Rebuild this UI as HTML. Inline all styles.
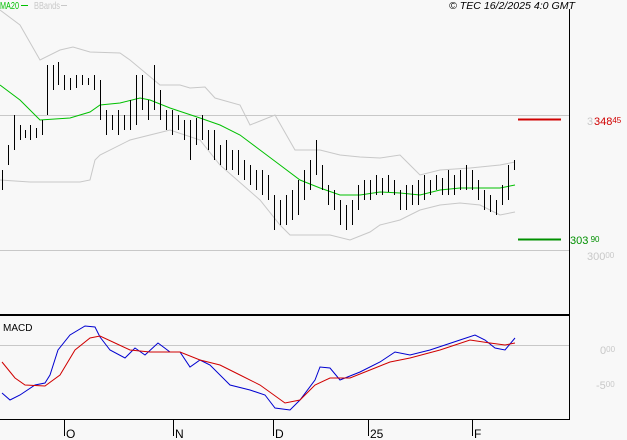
<!DOCTYPE html>
<html><head><style>
html,body{margin:0;padding:0;background:#f8f8f8;}
body{width:627px;height:440px;overflow:hidden;position:relative;font-family:"Liberation Sans",sans-serif;}
</style></head><body>
<svg width="627" height="440" viewBox="0 0 627 440" xmlns="http://www.w3.org/2000/svg" style="position:absolute;left:0;top:0">
<rect width="627" height="440" fill="#f8f8f8"/>
<line x1="0" y1="115.5" x2="569" y2="115.5" stroke="#c8c8c8"/>
<line x1="0" y1="250.5" x2="569" y2="250.5" stroke="#c8c8c8"/>
<line x1="0" y1="345.5" x2="569" y2="345.5" stroke="#c8c8c8"/>
<line x1="569.5" y1="9" x2="569.5" y2="420" stroke="#000"/>
<line x1="0" y1="315" x2="570" y2="315" stroke="#000" stroke-width="2"/>
<line x1="0" y1="419.5" x2="570" y2="419.5" stroke="#000"/>
<g stroke="#000"><line x1="64.5" y1="420" x2="64.5" y2="436"/><line x1="173.5" y1="420" x2="173.5" y2="436"/><line x1="273.5" y1="420" x2="273.5" y2="436"/><line x1="368.5" y1="420" x2="368.5" y2="436"/><line x1="472.5" y1="420" x2="472.5" y2="436"/></g>
<g font-size="12" fill="#000"><text x="66" y="438">O</text><text x="175" y="438">N</text><text x="275" y="438">D</text><text x="370" y="438">25</text><text x="474" y="438">F</text></g>
<text x="3" y="331" font-size="10">MACD</text>
<text x="0" y="9" font-size="10" fill="#00c000" textLength="19" lengthAdjust="spacingAndGlyphs">MA20</text>
<line x1="21" y1="5.5" x2="28" y2="5.5" stroke="#00c000"/>
<text x="34" y="9" font-size="10" fill="#c8c8c8" textLength="26" lengthAdjust="spacingAndGlyphs">BBands</text>
<line x1="61" y1="5.5" x2="67" y2="5.5" stroke="#c8c8c8"/>
<text x="449" y="9" font-size="10" font-style="italic" fill="#000" textLength="126" lengthAdjust="spacingAndGlyphs">© TEC 16/2/2025 4:0 GMT</text>
<polyline fill="none" stroke="#c8c8c8" points="0,10 20,25 40,60 60,50 73,47 90,52 120,53 130,60 160,85 180,85 190,88 205,87 215,98 240,105 250,125 275,115 295,150 320,150 340,155 360,157 380,158 400,155 410,165 420,175 440,170 470,168 500,165 515,162"/>
<polyline fill="none" stroke="#c8c8c8" points="0,180 30,182 80,182 90,180 95,160 100,155 130,140 150,135 170,130 200,140 220,165 260,200 280,225 290,235 310,235 330,235 350,240 370,232 380,225 400,220 420,210 440,205 460,203 480,205 500,215 515,212"/>
<polyline fill="none" stroke="#00c000" points="0,85 20,100 40,120 70,118 90,112 100,105 120,103 140,98 150,100 170,108 200,118 220,125 240,135 260,150 280,165 300,180 320,188 340,195 360,195 380,192 400,193 420,195 440,190 460,188 480,188 500,188 515,185"/>
<path stroke="#000" fill="none" d="M2.5 170v20M8.5 145v20M14.5 115v35M20.5 125v15M25.5 130v8M30.5 125v15M36.5 128v10M42.5 120v15M47.5 65v50M53.5 65v25M58.5 62v23M64.5 75v15M70.5 78v12M76.5 75v13M82.5 75v10M88.5 78v7M94.5 75v15M100.5 80v40M106.5 110v25M112.5 115v15M118.5 110v25M124.5 115v15M130.5 100v30M136.5 75v50M142.5 75v35M148.5 100v20M154.5 65v45M160.5 90v30M166.5 110v20M172.5 110v25M178.5 115v15M184.5 120v20M190.5 120v40M196.5 118v27M202.5 115v25M208.5 130v20M214.5 130v30M220.5 145v20M226.5 140v30M232.5 150v20M238.5 150v25M244.5 160v20M250.5 165v20M256.5 170v20M262.5 170v25M268.5 175v25M274.5 195v35M280.5 200v25M286.5 195v30M292.5 190v30M298.5 180v35M304.5 170v30M310.5 160v30M316.5 140v35M322.5 165v25M328.5 185v20M334.5 190v20M340.5 200v25M346.5 205v25M352.5 200v25M358.5 185v25M364.5 180v20M370.5 180v20M376.5 175v20M382.5 178v17M388.5 175v17M394.5 180v15M400.5 190v20M406.5 185v25M412.5 185v20M418.5 180v25M424.5 175v25M430.5 180v15M436.5 175v15M442.5 178v17M448.5 170v25M454.5 175v20M460.5 170v20M466.5 165v25M472.5 170v20M478.5 180v20M484.5 190v20M490.5 195v17M496.5 200v15M502.5 185v20M508.5 165v35M514.5 160v10"/>
<line x1="518" y1="119.5" x2="561" y2="119.5" stroke="#d00000" stroke-width="2"/>
<line x1="518" y1="239.5" x2="561" y2="239.5" stroke="#009000" stroke-width="2"/>
<text x="587" y="125" font-size="11" fill="#c8c8c8">3</text>
<text x="594" y="125" font-size="11" fill="#d00000">348<tspan font-size="8" dy="-2">45</tspan></text>
<text x="570" y="244" font-size="11" fill="#009000">303<tspan font-size="8" dy="-2"> 90</tspan></text>
<text x="587" y="260" font-size="11" fill="#c8c8c8">300<tspan font-size="8" dy="-2">00</tspan></text>
<text x="600" y="354" font-size="11" fill="#c8c8c8">0<tspan font-size="8" dy="-2">00</tspan></text>
<text x="596" y="389" font-size="11" fill="#c8c8c8">-5<tspan font-size="8" dy="-2">00</tspan></text>
<polyline fill="none" stroke="#0000d0" points="2,393 10,400 20,395 35,385 45,383 50,375 58,350 70,335 85,326 95,327 100,337 110,350 125,358 135,348 145,355 158,343 170,352 180,352 190,367 200,360 210,365 230,385 250,390 265,395 275,408 290,410 300,400 315,380 320,367 330,368 340,380 360,372 380,362 395,352 410,355 430,350 445,345 460,340 475,335 485,340 495,348 505,350 515,338"/>
<polyline fill="none" stroke="#d00000" points="2,362 15,378 25,385 45,386 60,375 75,350 90,338 100,336 115,343 130,350 150,352 180,352 200,360 220,365 240,375 260,385 285,403 300,400 315,385 330,378 350,378 370,370 390,362 410,358 440,350 470,340 490,343 505,345 515,343"/>
</svg>
</body></html>
